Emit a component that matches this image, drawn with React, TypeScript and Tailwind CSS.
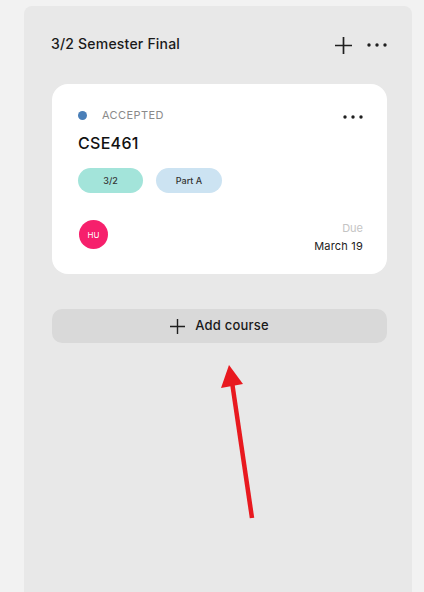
import React from "react";

function Dots({ className = "" }: { className?: string }) {
  return (
    <svg width="20" height="4" viewBox="0 0 20 4" className={className}>
      <circle cx="2" cy="2" r="1.7" fill="#1f1f1f" />
      <circle cx="10" cy="2" r="1.7" fill="#1f1f1f" />
      <circle cx="18" cy="2" r="1.7" fill="#1f1f1f" />
    </svg>
  );
}

function Plus({ size = 17, stroke = 1.6 }: { size?: number; stroke?: number }) {
  return (
    <svg width={size} height={size} viewBox="0 0 16 16">
      <path d="M8 0V16M0 8H16" stroke="#1f1f1f" strokeWidth={stroke} fill="none" />
    </svg>
  );
}

export default function App() {
  return (
    <div
      className="relative w-[424px] h-[592px] overflow-hidden bg-[#f2f2f2]"
      style={{ fontFamily: "Inter, 'Noto Sans', sans-serif" }}
    >
      <div className="ml-[24px] mt-[6px] w-[388px] h-[600px] rounded-[8px] bg-[#e8e8e8] pl-[28px] pr-[25px] pt-[28px]">
        <div className="flex items-center justify-between">
          <span className="text-[14px] leading-[20px] text-[#1a1a1a] font-medium -ml-[1px] tracking-[0.2px]">
            3/2 Semester Final
          </span>
          <div className="flex items-center gap-[15px] mt-[2px]">
            <Plus />
            <Dots />
          </div>
        </div>

        <div className="mt-[30px] bg-white rounded-[16px] h-[190px] pl-[26px] pr-[24px] pt-[24px]">
          <div className="flex items-center justify-between">
            <div className="flex items-center gap-[15px]">
              <span className="w-[9px] h-[9px] rounded-full bg-[#4a7fb8]" />
              <span className="text-[11px] leading-[14px] tracking-[0.4px] text-[#8a8a8a]">
                ACCEPTED
              </span>
            </div>
            <Dots className="mt-[3px]" />
          </div>
          <div className="mt-[11px] text-[16px] leading-[20px] font-medium text-[#111] tracking-[0.3px]">
            CSE461
          </div>
          <div className="mt-[15px] flex gap-[13px]">
            <span className="w-[65px] h-[25px] rounded-full bg-[#a3e4da] flex items-center justify-center text-[9px] font-medium text-[#333]">
              3/2
            </span>
            <span className="w-[66px] h-[25px] rounded-full bg-[#cce3f2] flex items-center justify-center text-[9px] font-medium text-[#333]">
              Part A
            </span>
          </div>
          <div className="mt-[27px] flex items-start justify-between">
            <div className="ml-[1px] w-[29px] h-[29px] rounded-full bg-[#f6206c] flex items-center justify-center text-[8px] text-white">
              HU
            </div>
            <div className="flex flex-col items-end">
              <span className="text-[11px] leading-[16px] text-[#c4c4c4]">Due</span>
              <span className="mt-[2px] text-[11px] leading-[16px] text-[#222] tracking-[0.2px]">March 19</span>
            </div>
          </div>
        </div>

        <div className="mt-[35px] h-[34px] rounded-[10px] bg-[#d9d9d9] flex items-center justify-center gap-[10px]">
          <Plus size={15} stroke={1.5} />
          <span className="text-[13px] font-medium text-[#1a1a1a] tracking-[0.2px]">Add course</span>
        </div>
      </div>

      <svg className="absolute left-0 top-0" width="424" height="592" viewBox="0 0 424 592">
        <line x1="252" y1="518" x2="232" y2="382" stroke="#e8191f" strokeWidth="4.5" />
        <polygon points="229,365 221,388 243,384" fill="#e8191f" />
      </svg>
    </div>
  );
}
